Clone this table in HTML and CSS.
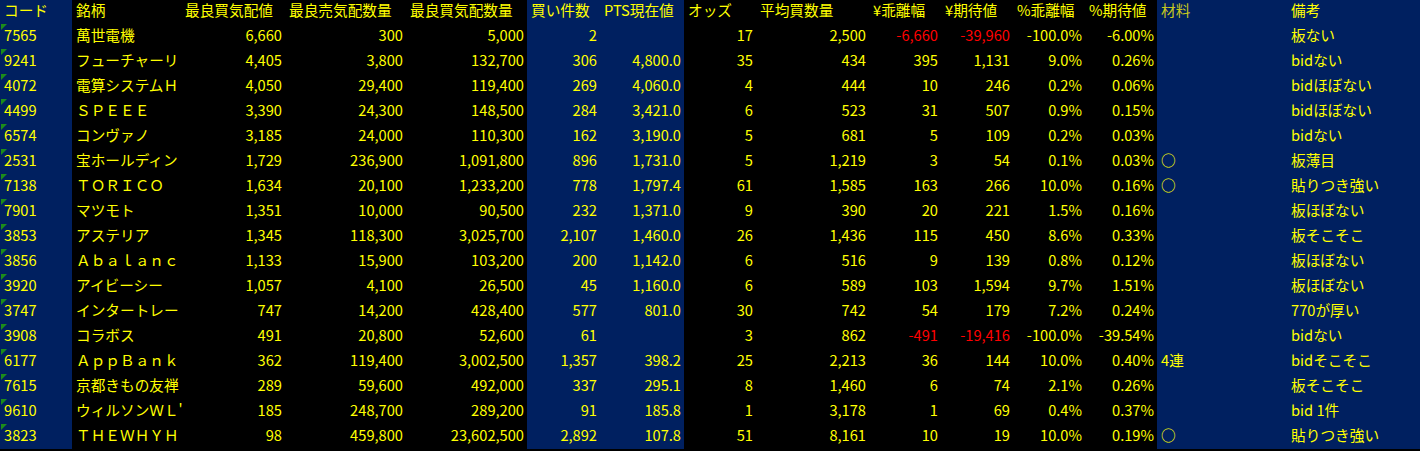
FILE: index.html
```html
<!DOCTYPE html>
<html lang="ja">
<head>
<meta charset="utf-8">
<title>PTS</title>
<link rel="stylesheet" href="styles.css">
</head>
<body>
<div class="sheet">
  <div class="row head">
    <div>コード</div><div>銘柄</div><div>最良買気配値</div><div>最良売気配数量</div><div>最良買気配数量</div><div>買い件数</div><div>PTS現在値</div><div>オッズ</div><div>平均買数量</div><div>¥乖離幅</div><div>¥期待値</div><div>%乖離幅</div><div>%期待値</div><div class="dim">材料</div><div>備考</div>
  </div>
  <div class="row"><div class="code">7565</div><div class="name">萬世電機</div><div class="n">6,660</div><div class="n">300</div><div class="n">5,000</div><div class="n">2</div><div class="n"></div><div class="n">17</div><div class="n">2,500</div><div class="n neg">-6,660</div><div class="n neg">-39,960</div><div class="n">-100.0%</div><div class="n">-6.00%</div><div></div><div>板ない</div></div>
  <div class="row"><div class="code">9241</div><div class="name">フューチャーリ</div><div class="n">4,405</div><div class="n">3,800</div><div class="n">132,700</div><div class="n">306</div><div class="n">4,800.0</div><div class="n">35</div><div class="n">434</div><div class="n">395</div><div class="n">1,131</div><div class="n">9.0%</div><div class="n">0.26%</div><div></div><div>bidない</div></div>
  <div class="row"><div class="code">4072</div><div class="name">電算システムＨ</div><div class="n">4,050</div><div class="n">29,400</div><div class="n">119,400</div><div class="n">269</div><div class="n">4,060.0</div><div class="n">4</div><div class="n">444</div><div class="n">10</div><div class="n">246</div><div class="n">0.2%</div><div class="n">0.06%</div><div></div><div>bidほぼない</div></div>
  <div class="row"><div class="code">4499</div><div class="name">ＳＰＥＥＥ</div><div class="n">3,390</div><div class="n">24,300</div><div class="n">148,500</div><div class="n">284</div><div class="n">3,421.0</div><div class="n">6</div><div class="n">523</div><div class="n">31</div><div class="n">507</div><div class="n">0.9%</div><div class="n">0.15%</div><div></div><div>bidほぼない</div></div>
  <div class="row"><div class="code">6574</div><div class="name">コンヴァノ</div><div class="n">3,185</div><div class="n">24,000</div><div class="n">110,300</div><div class="n">162</div><div class="n">3,190.0</div><div class="n">5</div><div class="n">681</div><div class="n">5</div><div class="n">109</div><div class="n">0.2%</div><div class="n">0.03%</div><div></div><div>bidない</div></div>
  <div class="row"><div class="code">2531</div><div class="name">宝ホールディン</div><div class="n">1,729</div><div class="n">236,900</div><div class="n">1,091,800</div><div class="n">896</div><div class="n">1,731.0</div><div class="n">5</div><div class="n">1,219</div><div class="n">3</div><div class="n">54</div><div class="n">0.1%</div><div class="n">0.03%</div><div>○</div><div>板薄目</div></div>
  <div class="row"><div class="code">7138</div><div class="name">ＴＯＲＩＣＯ</div><div class="n">1,634</div><div class="n">20,100</div><div class="n">1,233,200</div><div class="n">778</div><div class="n">1,797.4</div><div class="n">61</div><div class="n">1,585</div><div class="n">163</div><div class="n">266</div><div class="n">10.0%</div><div class="n">0.16%</div><div>○</div><div>貼りつき強い</div></div>
  <div class="row"><div class="code">7901</div><div class="name">マツモト</div><div class="n">1,351</div><div class="n">10,000</div><div class="n">90,500</div><div class="n">232</div><div class="n">1,371.0</div><div class="n">9</div><div class="n">390</div><div class="n">20</div><div class="n">221</div><div class="n">1.5%</div><div class="n">0.16%</div><div></div><div>板ほぼない</div></div>
  <div class="row"><div class="code">3853</div><div class="name">アステリア</div><div class="n">1,345</div><div class="n">118,300</div><div class="n">3,025,700</div><div class="n">2,107</div><div class="n">1,460.0</div><div class="n">26</div><div class="n">1,436</div><div class="n">115</div><div class="n">450</div><div class="n">8.6%</div><div class="n">0.33%</div><div></div><div>板そこそこ</div></div>
  <div class="row"><div class="code">3856</div><div class="name">Ａｂａｌａｎｃ</div><div class="n">1,133</div><div class="n">15,900</div><div class="n">103,200</div><div class="n">200</div><div class="n">1,142.0</div><div class="n">6</div><div class="n">516</div><div class="n">9</div><div class="n">139</div><div class="n">0.8%</div><div class="n">0.12%</div><div></div><div>板ほぼない</div></div>
  <div class="row"><div class="code">3920</div><div class="name">アイビーシー</div><div class="n">1,057</div><div class="n">4,100</div><div class="n">26,500</div><div class="n">45</div><div class="n">1,160.0</div><div class="n">6</div><div class="n">589</div><div class="n">103</div><div class="n">1,594</div><div class="n">9.7%</div><div class="n">1.51%</div><div></div><div>板ほぼない</div></div>
  <div class="row"><div class="code">3747</div><div class="name">インタートレー</div><div class="n">747</div><div class="n">14,200</div><div class="n">428,400</div><div class="n">577</div><div class="n">801.0</div><div class="n">30</div><div class="n">742</div><div class="n">54</div><div class="n">179</div><div class="n">7.2%</div><div class="n">0.24%</div><div></div><div>770が厚い</div></div>
  <div class="row"><div class="code">3908</div><div class="name">コラボス</div><div class="n">491</div><div class="n">20,800</div><div class="n">52,600</div><div class="n">61</div><div class="n"></div><div class="n">3</div><div class="n">862</div><div class="n neg">-491</div><div class="n neg">-19,416</div><div class="n">-100.0%</div><div class="n">-39.54%</div><div></div><div>bidない</div></div>
  <div class="row"><div class="code">6177</div><div class="name">ＡｐｐＢａｎｋ</div><div class="n">362</div><div class="n">119,400</div><div class="n">3,002,500</div><div class="n">1,357</div><div class="n">398.2</div><div class="n">25</div><div class="n">2,213</div><div class="n">36</div><div class="n">144</div><div class="n">10.0%</div><div class="n">0.40%</div><div>4連</div><div>bidそこそこ</div></div>
  <div class="row"><div class="code">7615</div><div class="name">京都きもの友禅</div><div class="n">289</div><div class="n">59,600</div><div class="n">492,000</div><div class="n">337</div><div class="n">295.1</div><div class="n">8</div><div class="n">1,460</div><div class="n">6</div><div class="n">74</div><div class="n">2.1%</div><div class="n">0.26%</div><div></div><div>板そこそこ</div></div>
  <div class="row"><div class="code">9610</div><div class="name">ウィルソンＷＬ'</div><div class="n">185</div><div class="n">248,700</div><div class="n">289,200</div><div class="n">91</div><div class="n">185.8</div><div class="n">1</div><div class="n">3,178</div><div class="n">1</div><div class="n">69</div><div class="n">0.4%</div><div class="n">0.37%</div><div></div><div>bid 1件</div></div>
  <div class="row"><div class="code">3823</div><div class="name">ＴＨＥＷＨＹＨ</div><div class="n">98</div><div class="n">459,800</div><div class="n">23,602,500</div><div class="n">2,892</div><div class="n">107.8</div><div class="n">51</div><div class="n">8,161</div><div class="n">10</div><div class="n">19</div><div class="n">10.0%</div><div class="n">0.19%</div><div>○</div><div>貼りつき強い</div></div>
</div>
</body>
</html>
```

FILE: styles.css
```css
html, body {
  margin: 0;
  padding: 0;
  background: #000000;
}

body {
  width: 1420px;
  height: 451px;
  overflow: hidden;
  font-family: "Noto Sans CJK JP", "Noto Sans", sans-serif;
  font-size: 14.67px;
  color: #ffff00;
}

.sheet {
  display: flex;
  flex-direction: column;
}

.row {
  display: grid;
  grid-template-columns: 72px 109px 104px 121px 121px 73px 84px 72px 113px 72px 72px 72px 72px 130px 133px;
  height: 25px;
}

.row.head {
  height: 24px;
}

.row > div {
  padding: 0 3px 0 4px;
  line-height: 22px;
  white-space: nowrap;
  overflow: hidden;
}

.row > .name {
  padding-right: 0;
  overflow: visible;
}

.row.head > div {
  line-height: 20px;
}

.row > div:nth-child(1),
.row > div:nth-child(6),
.row > div:nth-child(7),
.row > div:nth-child(14),
.row > div:nth-child(15) {
  background: #002060;
}

.row > .n {
  text-align: right;
}

.row > .neg {
  color: #ff0000;
}

.row > .dim {
  color: #c8c81e;
}

.row > .code {
  position: relative;
}

.row > .code::before {
  content: "";
  position: absolute;
  left: 1px;
  top: 0;
  width: 0;
  height: 0;
  border-top: 6px solid #1c8c1c;
  border-right: 6px solid transparent;
}
```
